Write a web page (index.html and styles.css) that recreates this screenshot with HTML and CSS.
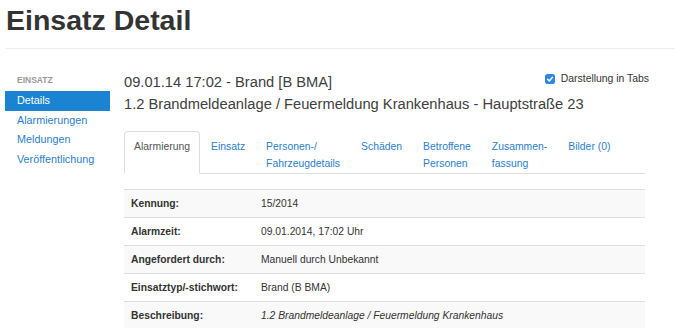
FILE: index.html
```html
<!DOCTYPE html>
<html lang="de">
<head>
<meta charset="utf-8">
<title>Einsatz Detail</title>
<link rel="stylesheet" href="styles.css">
</head>
<body>
<header class="page-header">
  <h1>Einsatz Detail</h1>
</header>
<div class="layout">
  <nav class="sidebar">
    <div class="nav-header">EINSATZ</div>
    <ul class="nav-list">
      <li class="active"><a href="#">Details</a></li>
      <li><a href="#">Alarmierungen</a></li>
      <li><a href="#">Meldungen</a></li>
      <li><a href="#">Veröffentlichung</a></li>
    </ul>
  </nav>
  <main class="content">
    <div class="head-row">
      <div class="titles">
        <h2>09.01.14 17:02 - Brand [B BMA]</h2>
        <h3>1.2 Brandmeldeanlage / Feuermeldung Krankenhaus - Hauptstraße 23</h3>
      </div>
      <label class="toggle">
        <span class="check"><svg viewBox="0 0 10 10" width="10" height="10"><path d="M2.6 5.2 L4.3 6.9 L7.5 3.3" fill="none" stroke="#fff" stroke-width="1.5" stroke-linecap="round" stroke-linejoin="round"/></svg></span>
        Darstellung in Tabs
      </label>
    </div>
    <ul class="tabs">
      <li class="tab active"><a href="#">Alarmierung</a></li>
      <li class="tab"><a href="#">Einsatz</a></li>
      <li class="tab"><a href="#">Personen-/<br>Fahrzeugdetails</a></li>
      <li class="tab"><a href="#">Schäden</a></li>
      <li class="tab"><a href="#">Betroffene<br>Personen</a></li>
      <li class="tab"><a href="#">Zusammen-<br>fassung</a></li>
      <li class="tab"><a href="#">Bilder (0)</a></li>
    </ul>
    <table class="details">
      <colgroup><col class="col-label"><col></colgroup>
      <tbody>
        <tr class="odd"><th>Kennung:</th><td>15/2014</td></tr>
        <tr><th>Alarmzeit:</th><td>09.01.2014, 17:02 Uhr</td></tr>
        <tr class="odd"><th>Angefordert durch:</th><td>Manuell durch Unbekannt</td></tr>
        <tr><th>Einsatztyp/-stichwort:</th><td>Brand (B BMA)</td></tr>
        <tr class="odd"><th>Beschreibung:</th><td><em>1.2 Brandmeldeanlage / Feuermeldung Krankenhaus</em></td></tr>
      </tbody>
    </table>
  </main>
</div>
</body>
</html>
```
FILE: styles.css
```css
html, body {
  margin: 0;
  padding: 0;
  background: #fff;
}
body {
  font-family: "Liberation Sans", Arial, Helvetica, sans-serif;
  color: #333;
  overflow: hidden;
}
a {
  text-decoration: none;
  color: #2a80cc;
}
.page-header {
  margin: 0 0 0 6px;
  padding: 5px 0 12px 0;
  border-bottom: 1px solid #eee;
}
.page-header h1 {
  margin: 0;
  font-size: 28.5px;
  line-height: 31px;
  font-weight: bold;
  color: #333;
}
.layout {
  display: flex;
  align-items: flex-start;
  padding-left: 5px;
}
.sidebar {
  width: 105px;
  flex: none;
  padding-top: 25px;
}
.nav-header {
  font-size: 8.5px;
  line-height: 12px;
  font-weight: bold;
  color: #999;
  padding-left: 12px;
  margin-bottom: 5px;
}
.nav-list {
  list-style: none;
  margin: 0;
  padding: 0;
}
.nav-list a {
  display: block;
  padding: 3px 12px;
  font-size: 10.8px;
  line-height: 13.5px;
  color: #2a80cc;
}
.nav-list .active a {
  background: #1a84d3;
  color: #fff;
}
.content {
  margin-left: 14px;
  width: 525px;
  flex: none;
}
.head-row {
  display: flex;
  align-items: flex-start;
  margin-top: 22px;
}
.titles {
  flex: 1;
  min-width: 0;
}
.titles h2,
.titles h3 {
  margin: 0;
  font-size: 14.7px;
  line-height: 22px;
  font-weight: normal;
  color: #404040;
  white-space: nowrap;
}
.toggle {
  flex: none;
  display: flex;
  align-items: center;
  gap: 6px;
  margin-top: 1px;
  font-size: 10.4px;
  line-height: 14px;
  color: #333;
  white-space: nowrap;
}
.check {
  display: block;
  width: 10px;
  height: 10px;
  border-radius: 2.5px;
  background: #2f86e0;
}
.check svg {
  display: block;
}
.tabs {
  display: flex;
  list-style: none;
  margin: 16px 4px 0 0;
  padding: 0;
  border-bottom: 1px solid #ddd;
  font-size: 10.4px;
}
.tab {
  flex: none;
  margin: 0 1px -1px 0;
  border: 1px solid transparent;
  border-radius: 4px 4px 0 0;
}
.tab a {
  display: block;
  padding: 6px 9px 1px;
  line-height: 17px;
  white-space: nowrap;
  color: #2a80cc;
}
.tab.active {
  border-color: #ddd;
  border-bottom-color: #fff;
  background: #fff;
}
.tab.active a {
  color: #555;
}
.details {
  width: 521px;
  margin-top: 15px;
  border-collapse: collapse;
  table-layout: fixed;
  font-size: 10.3px;
}
.col-label {
  width: 130px;
}
.details th,
.details td {
  text-align: left;
  padding: 6.5px 7px;
  line-height: 14px;
  border-top: 1px solid #ddd;
  white-space: nowrap;
}
.details th {
  font-weight: bold;
  color: #333;
}
.details td {
  color: #333;
}
.details tr.odd {
  background: #f9f9f9;
}
.details tr:last-child th,
.details tr:last-child td {
  border-bottom: 1px solid #ddd;
}
```
